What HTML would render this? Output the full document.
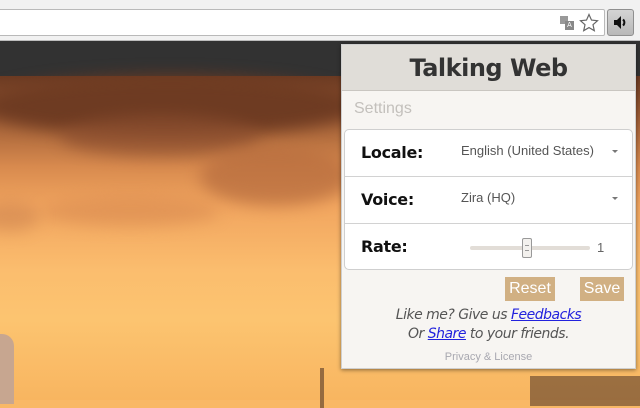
<!DOCTYPE html>
<html><head><meta charset="utf-8"><style>
*{margin:0;padding:0;box-sizing:border-box}
body{width:640px;height:400px;overflow:hidden;position:relative;font-family:"Liberation Sans",sans-serif;background:#f9b866}
.tool{position:absolute;left:0;top:0;width:640px;height:41px;background:#f1f1f1;border-bottom:1px solid #bdbdbd}
.addr{position:absolute;left:-4px;top:9px;width:609px;height:27px;background:#fff;border:1px solid #b9b9b9;border-radius:2px}
.btn{position:absolute;left:607px;top:9px;width:27px;height:27px;background:linear-gradient(#d4d4d4,#b8b8b8);border:1px solid #8f8f8f;border-radius:3px}
.dark{position:absolute;left:0;top:41px;width:640px;height:35px;background:#323232}
.sky{position:absolute;left:0;top:76px;width:640px;height:324px;background:linear-gradient(#6b3a22 0%,#9a5a34 12%,#d88a4e 28%,#f1a55f 40%,#fbbd6e 60%,#fcc470 75%,#f8b560 100%)}
.cl{position:absolute;border-radius:50%;filter:blur(8px)}
.pop{position:absolute;left:341px;top:44px;width:295px;height:325px;background:#f7f5f2;border:1px solid #cfcfcf;box-shadow:0 1px 4px rgba(0,0,0,.45)}
.hdr{height:46px;background:#e0ddd8;border-bottom:1px solid #c9c6c1;text-align:center;font:bold 24px/46px "DejaVu Sans","Liberation Sans",sans-serif;letter-spacing:-.5px;color:#333}
.set{position:absolute;left:12px;top:55px;font-size:16px;color:#c3c0bc}
.card{position:absolute;left:2px;top:84px;width:289px;height:141px;background:#fff;border:1px solid #cfcfcf;border-radius:5px}
.row{height:47px;border-bottom:1px solid #d2d2d2;position:relative}
.row:last-child{border-bottom:0}
.lab{position:absolute;left:16px;top:13px;font:bold 16px "DejaVu Sans",sans-serif;color:#111;letter-spacing:-.3px}
.val{position:absolute;left:116px;top:13px;font-size:13px;color:#555}
.arr{position:absolute;right:14px;top:20px;width:0;height:0;border-left:3px solid transparent;border-right:3px solid transparent;border-top:3px solid #777}
.b{position:absolute;top:232px;height:24px;background:#d1b083;color:#fff;font-size:16px;line-height:24px;text-align:center}
.txt{position:absolute;left:0;width:293px;text-align:center;font-style:italic;font-size:14px;color:#555;font-family:"DejaVu Sans",sans-serif;letter-spacing:-.5px}
.txt a{color:#2222dd;text-decoration:underline}
</style></head><body>
<div class="tool"><div class="addr">
<div style="position:absolute;left:563px;top:6px;width:14px;height:14px">
<div style="position:absolute;left:0;top:0;width:8px;height:8px;background:#999"></div>
<div style="position:absolute;left:5px;top:5px;width:9px;height:9px;background:#888;color:#fff;font-size:7px;line-height:9px;text-align:center">A</div></div>
<svg style="position:absolute;left:582px;top:3px" width="20" height="20" viewBox="0 0 20 20"><path d="M10 1.5l2.5 5.6 6 .6-4.5 4 1.3 6-5.3-3.1-5.3 3.1 1.3-6-4.5-4 6-.6z" fill="none" stroke="#666" stroke-width="1.2"/></svg>
</div>
<div class="btn"><svg width="25" height="25" viewBox="0 0 25 25"><path d="M6 10h3l4-4v13l-4-4H6z" fill="#111"/><path d="M15 9.5a4 4 0 0 1 0 6" stroke="#111" stroke-width="2" fill="none"/></svg></div>
</div>
<div class="dark"></div>
<div class="sky">
<div class="cl" style="left:-20px;top:0;width:380px;height:60px;background:#6e3b22"></div>
<div class="cl" style="left:60px;top:40px;width:200px;height:40px;background:#8e5030;opacity:.7"></div>
<div class="cl" style="left:200px;top:70px;width:150px;height:60px;background:#b66c3e;opacity:.7"></div>
<div class="cl" style="left:40px;top:120px;width:180px;height:30px;background:#d88a50;opacity:.6"></div>
<div class="cl" style="left:-20px;top:125px;width:60px;height:30px;background:#cf8550;opacity:.6"></div>
<div style="position:absolute;left:0;top:258px;width:14px;height:70px;background:#c7a690;border-radius:0 12px 0 0"></div>
<div style="position:absolute;left:320px;top:292px;width:4px;height:40px;background:#6b4a30;opacity:.7"></div>
<div style="position:absolute;left:530px;top:300px;width:110px;height:30px;background:#5b3d2a;opacity:.6"></div>
</div>
<div class="pop">
<div class="hdr">Talking Web</div>
<div class="set">Settings</div>
<div class="card">
<div class="row"><div class="lab">Locale:</div><div class="val">English (United States)</div><div class="arr"></div></div>
<div class="row"><div class="lab">Voice:</div><div class="val">Zira (HQ)</div><div class="arr"></div></div>
<div class="row"><div class="lab">Rate:</div>
<div style="position:absolute;left:125px;top:22px;width:120px;height:4px;background:#e2ddd7;border-radius:2px"></div>
<div style="position:absolute;left:177px;top:14px;width:10px;height:20px;background:#f3f1ee;border:1px solid #999;border-radius:2px"><div style="margin:6px 2px;height:6px;border-top:1px solid #999;border-bottom:1px solid #999"></div></div>
<div style="position:absolute;left:252px;top:16px;font-size:13px;color:#666">1</div></div>
</div>
<div class="b" style="left:163px;width:50px">Reset</div>
<div class="b" style="left:238px;width:44px">Save</div>
<div class="txt" style="top:262px">Like me? Give us <a>Feedbacks</a></div>
<div class="txt" style="top:281px">Or <a>Share</a> to your friends.</div>
<div style="position:absolute;left:0;top:306px;width:293px;text-align:center;font-size:11px;color:#a8a8b0">Privacy &amp; License</div>
</div>
</body></html>
